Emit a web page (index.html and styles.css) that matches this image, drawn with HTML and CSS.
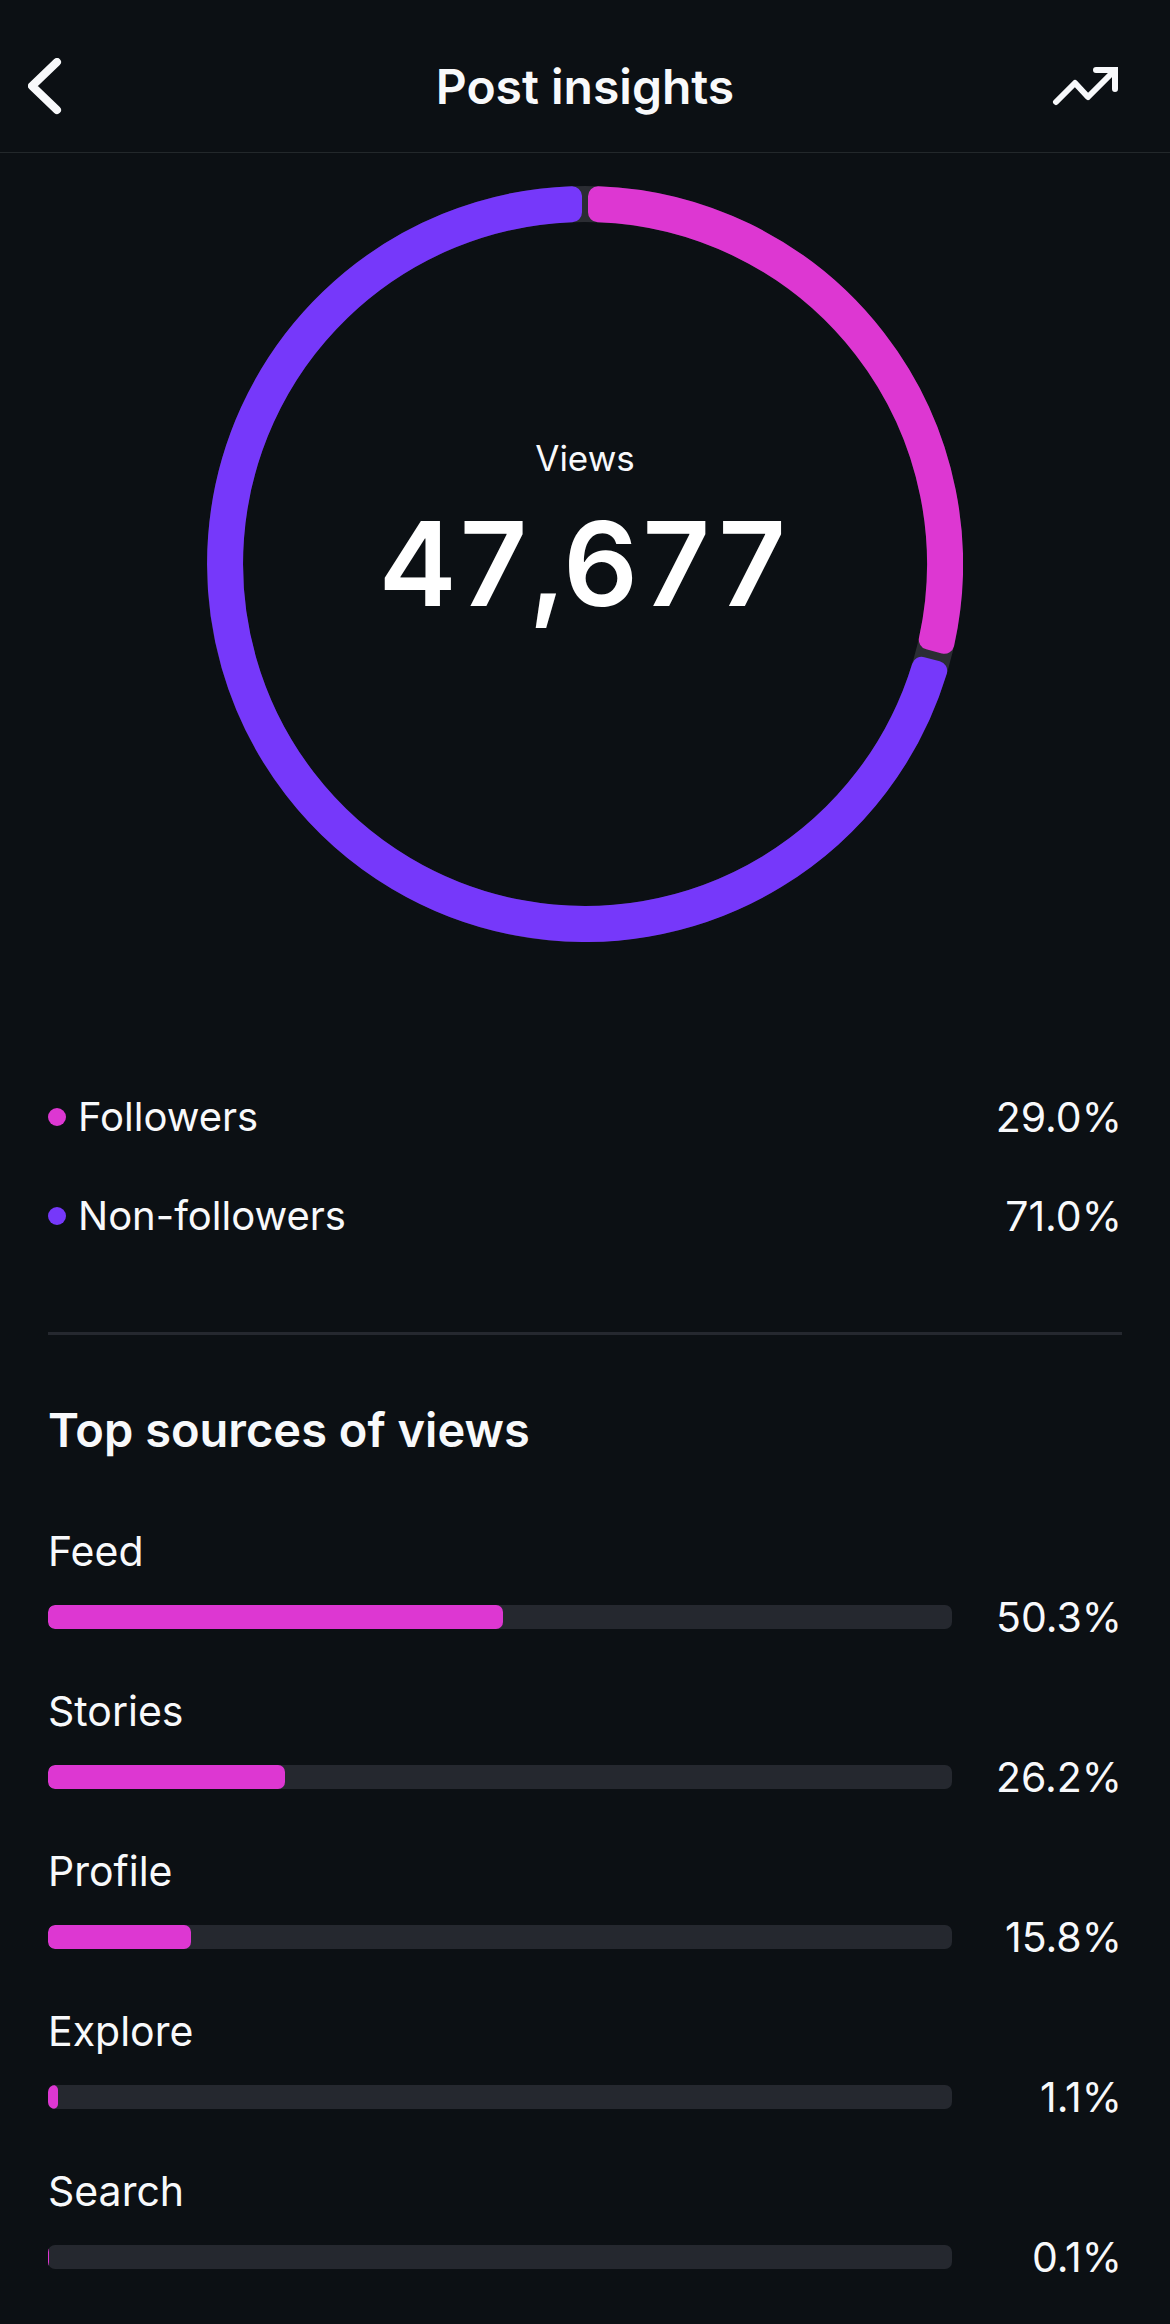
FILE: index.html
```html
<!DOCTYPE html>
<html lang="en">
<head>
  <meta charset="UTF-8" />
  <meta name="viewport" content="width=device-width, initial-scale=1" />
  <title>Post insights</title>
  <link rel="stylesheet" href="styles.css">
</head>
<body>
  <!-- Top bar -->
  <header class="header">
    <button class="icon-button back" type="button" aria-label="Back">
      <svg width="34" height="58" viewBox="0 0 34 58" fill="none" stroke="currentColor" stroke-width="8" stroke-linecap="round" stroke-linejoin="round">
        <path d="M29 4 L4 28 L29 52" />
      </svg>
    </button>
    <h1 class="title">Post insights</h1>
    <button class="icon-button trend" type="button" aria-label="Boost post">
      <svg width="70" height="40" viewBox="0 0 70 40" fill="none" stroke="currentColor" stroke-width="6" stroke-linecap="round" stroke-linejoin="round">
        <path d="M4 35 L23 16 L36 30 L62 4" />
        <path d="M44 3 H63 V22" stroke-linejoin="miter" />
      </svg>
    </button>
  </header>

  <main class="content">
    <!-- Views ring: followers / non-followers -->
    <section class="chart">
      <svg class="ring" viewBox="-378 -378 756 756" aria-hidden="true">
        <circle class="ring-track" r="360" />
        <path class="ring-part followers" d="M13 -367.8 A368 368 0 0 1 359.3 79.8 L343.8 75.7 A352 352 0 0 0 13 -351.8 Z" />
        <path class="ring-part non-followers" d="M352.2 106.9 A368 368 0 1 1 -13 -367.8 L-13 -351.8 A352 352 0 1 0 336.7 102.8 Z" />
      </svg>
      <div class="total">
        <div class="total-label">Views</div>
        <div class="total-value">47,677</div>
      </div>
    </section>

    <!-- Legend -->
    <ul class="legend">
      <li class="legend-row">
        <span class="dot followers"></span>
        <span class="legend-name">Followers</span>
        <span>29.0%</span>
      </li>
      <li class="legend-row">
        <span class="dot non-followers"></span>
        <span class="legend-name">Non-followers</span>
        <span>71.0%</span>
      </li>
    </ul>

    <hr class="divider">

    <!-- Sources, one bar each -->
    <section>
      <h2 class="heading">Top sources of views</h2>
      <ul class="sources">
        <li>
          <div class="source-name">Feed</div>
          <div class="source-row">
            <div class="bar"><div class="bar-fill" style="width: 50.3%"></div></div>
            <span class="source-value">50.3%</span>
          </div>
        </li>
        <li>
          <div class="source-name">Stories</div>
          <div class="source-row">
            <div class="bar"><div class="bar-fill" style="width: 26.2%"></div></div>
            <span class="source-value">26.2%</span>
          </div>
        </li>
        <li>
          <div class="source-name">Profile</div>
          <div class="source-row">
            <div class="bar"><div class="bar-fill" style="width: 15.8%"></div></div>
            <span class="source-value">15.8%</span>
          </div>
        </li>
        <li>
          <div class="source-name">Explore</div>
          <div class="source-row">
            <div class="bar"><div class="bar-fill" style="width: 1.1%"></div></div>
            <span class="source-value">1.1%</span>
          </div>
        </li>
        <li>
          <div class="source-name">Search</div>
          <div class="source-row">
            <div class="bar"><div class="bar-fill" style="width: 0.1%"></div></div>
            <span class="source-value">0.1%</span>
          </div>
        </li>
      </ul>
    </section>
  </main>
</body>
</html>
```

FILE: styles.css
```css
* {
  box-sizing: border-box;
}

body {
  margin: 0;
  background-color: #0c1014;
  color: #f8f9fb;
  font-family: Inter, 'Liberation Sans', sans-serif;
  font-size: 41px;
  line-height: 48px;
}

ul {
  list-style: none;
  margin: 0;
  padding: 0;
}

/* Top bar */
.header {
  display: grid;
  grid-template-columns: 1fr auto 1fr;
  align-items: center;
  padding: 58px 48px 36px;
  border-bottom: 1px solid #23282b;
}

.icon-button {
  display: flex;
  padding: 0;
  border: none;
  background: none;
  color: inherit;
  cursor: pointer;
}

.back {
  justify-self: start;
  margin-left: -20px;
}

.trend {
  justify-self: end;
}

.title,
.heading {
  margin: 0;
  font-size: 47px;
  line-height: 56px;
  font-weight: 600;
}

.title {
  font-size: 48px;
}

.content {
  padding: 33px 48px 44px;
}

/* Ring with the total in the middle */
.chart {
  display: grid;
  place-items: center;
}

.ring,
.total {
  grid-area: 1 / 1;
}

.ring {
  display: block;
  width: 100%;
  max-width: 756px;
}

.ring-track {
  fill: none;
  stroke: #2b2d33;
  stroke-width: 36;
}

/* The stroke rounds the corners of each part */
.ring-part {
  fill: currentColor;
  stroke: currentColor;
  stroke-width: 20;
  stroke-linejoin: round;
}

.ring-part.followers {
  color: #dd37d2;
}

.ring-part.non-followers {
  color: #7638fa;
}

.total {
  display: flex;
  flex-direction: column;
  gap: 12px;
  padding-bottom: 60px;
  text-align: center;
}

.total-label {
  font-size: 35px;
}

.total-value {
  color: #fff;
  font-size: 117px;
  line-height: 140px;
  font-weight: 600;
  font-variant-numeric: tabular-nums;
}

/* Legend */
.legend {
  display: flex;
  flex-direction: column;
  gap: 51px;
  margin-top: 151px;
}

.legend-row {
  display: flex;
  align-items: center;
  gap: 12px;
}

.legend-name {
  flex: 1;
  font-size: 40px;
}

.dot {
  width: 18px;
  height: 18px;
  border-radius: 50%;
}

.dot.followers {
  background-color: #dd37d2;
}

.dot.non-followers {
  background-color: #7638fa;
}

.divider {
  height: 3px;
  margin: 92px 0 67px;
  border: none;
  background-color: #25282f;
}

/* Sources */
.sources {
  display: flex;
  flex-direction: column;
  gap: 46px;
  margin-top: 69px;
}

.source-row {
  display: flex;
  align-items: center;
  gap: 44px;
  margin-top: 18px;
}

.bar {
  flex: 1;
  height: 24px;
  border-radius: 7px;
  background-color: #25282f;
  overflow: hidden;
}

.bar-fill {
  height: 100%;
  border-radius: 7px;
  background-color: #dd37d2;
}

.source-value {
  width: 126px;
  text-align: right;
}
```
